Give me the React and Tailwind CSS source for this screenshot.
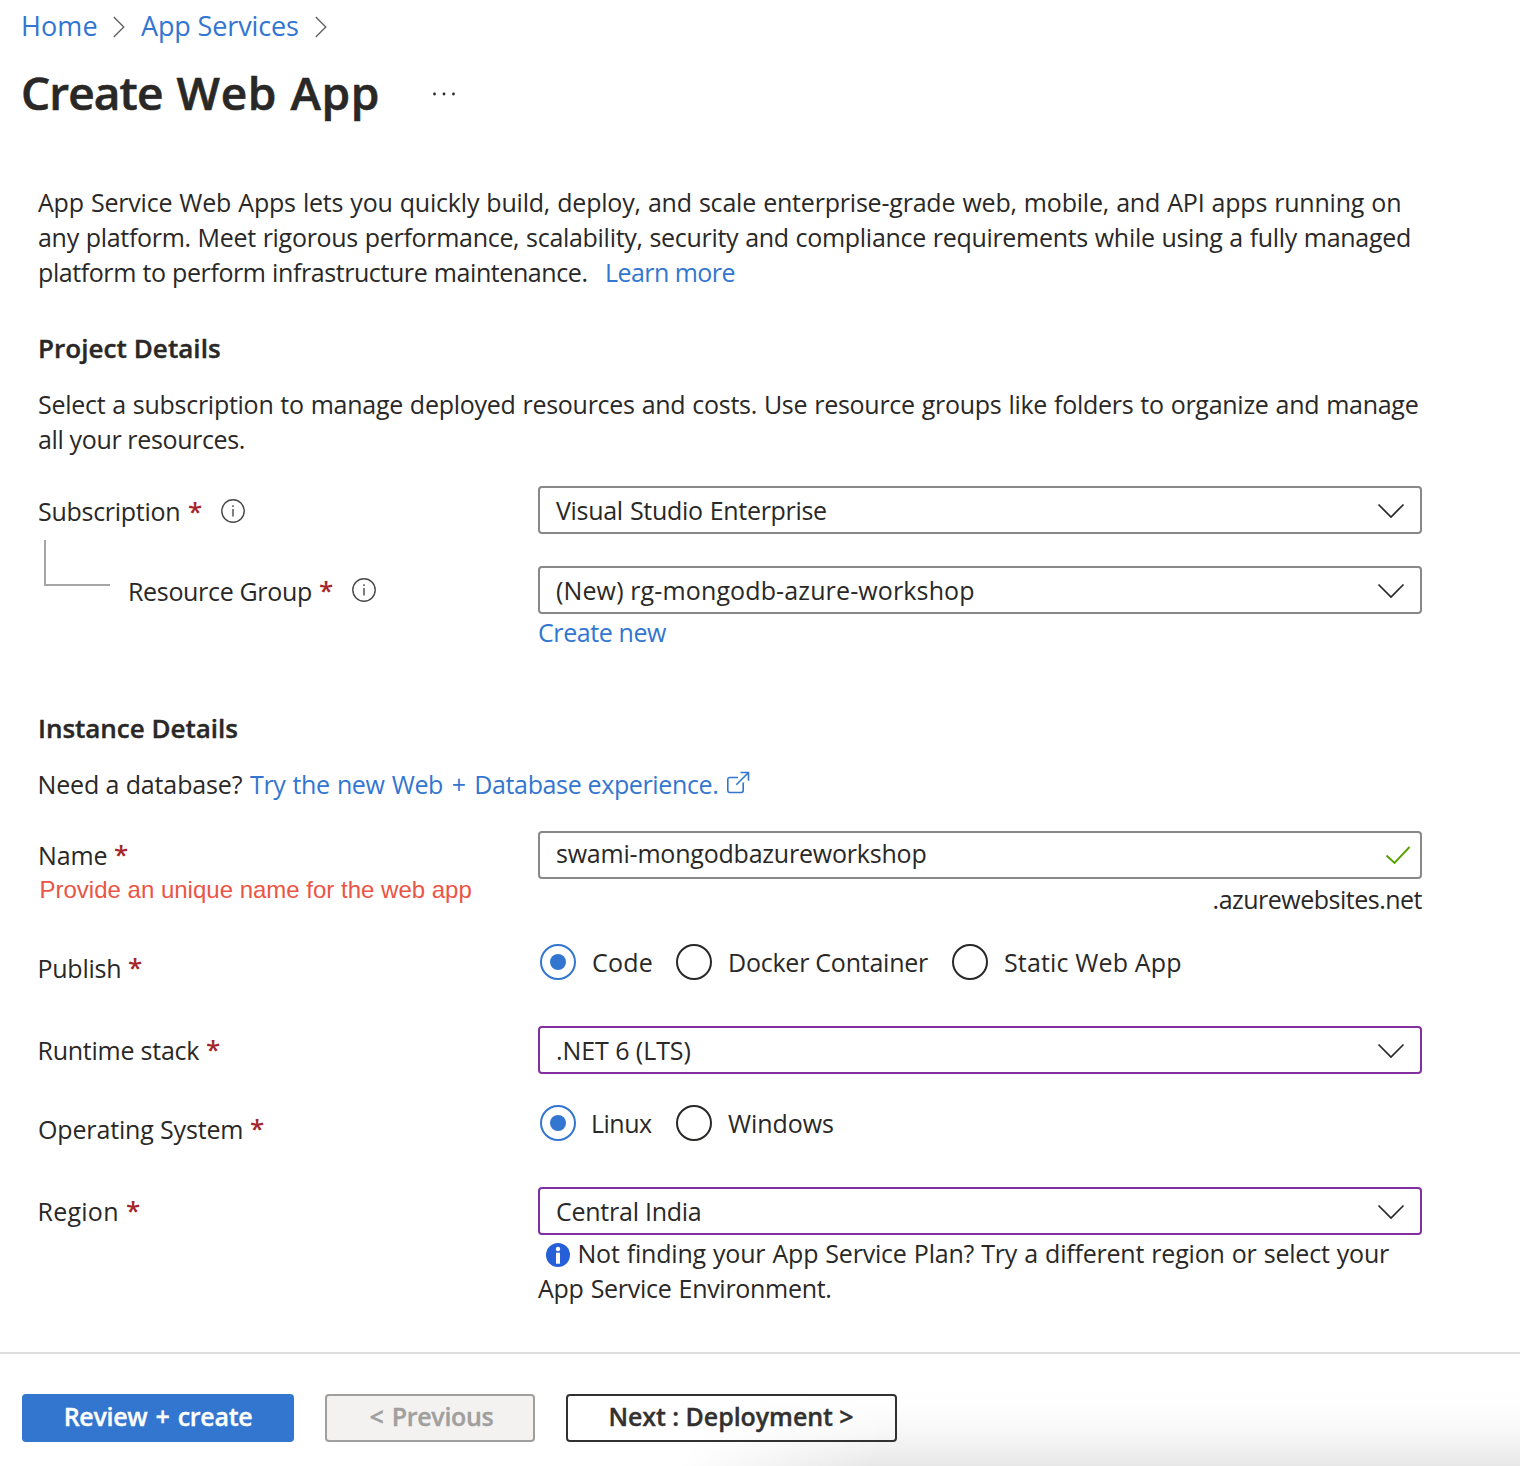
import React from "react";

function Chevron() {
  return (
    <svg className="mt-[2px] mr-[15px] block shrink-0" width="28" height="16" viewBox="0 0 28 16" fill="none" stroke="#292827" strokeWidth="1.7">
      <path d="M1.5 1.5 L14 14 L26.5 1.5" />
    </svg>
  );
}

function Crumb({ className }) {
  return (
    <svg className={className} width="12" height="22" viewBox="0 0 12 22" fill="none" stroke="#605e5c" strokeWidth="1.3">
      <path d="M0.8 1 L10.8 11 L0.8 21" />
    </svg>
  );
}

function Info({ className }) {
  return (
    <svg className={className} width="24" height="24" viewBox="0 0 24 24" fill="none" stroke="#4a4846" strokeWidth="1.4">
      <circle cx="12" cy="12" r="11.2" />
      <path d="M12 10v7.6" />
      <path d="M12 6.3v1.8" />
    </svg>
  );
}

function Star({ className = "ml-[8px]" }) {
  return <span className={`${className} text-[#a4262c] font-semibold text-[26px]`}>*</span>;
}

function Select({ border = "border-[#8a8886]", children }) {
  return (
    <div className={`flex h-12 w-[884px] items-center justify-between rounded-[4px] border-2 ${border} bg-white`}>
      <span className="leading-[44px]">{children}</span>
      <Chevron />
    </div>
  );
}

function Radio({ checked, className = "" }) {
  return (
    <span className={`${className} flex size-9 shrink-0 items-center justify-center rounded-full border-2 ${checked ? "border-[#3276d0]" : "border-[#292827]"}`}>
      {checked && <span className="size-4 rounded-full bg-[#3276d0]" />}
    </span>
  );
}

export default function App() {
  return (
    <div className="flex h-[1466px] w-[1520px] flex-col overflow-hidden bg-white font-['Open_Sans','Noto_Sans',sans-serif] text-[25px] leading-[36px] whitespace-nowrap text-[#292827]">
      <nav className="flex h-[45px] items-start pt-[6px] text-[27px] leading-[40px] text-[#3276d0]">
        <a className="ml-[21px] w-[92px] tracking-[0.1px]">Home</a>
        <Crumb className="mt-[10px]" />
        <a className="ml-[16px] w-[174px] tracking-[-0.14px]">App Services</a>
        <Crumb className="mt-[10px]" />
      </nav>

      <header className="mt-[15px] flex h-16 items-center">
        <h1 className="ml-[21px] w-[411px] text-[46px] leading-[64px] font-semibold tracking-[0.6px] [-webkit-text-stroke:0.6px]">
          <span className="mr-[1.500px] tracking-[-0.9px]">Create</span> Web <span className="ml-[1px]">App</span>
        </h1>
        <svg className="mt-[4px]" width="24" height="4" viewBox="0 0 24 4" fill="#292827">
          <circle cx="2.5" cy="2" r="1.4" />
          <circle cx="12" cy="2" r="1.4" />
          <circle cx="21.500" cy="2" r="1.4" />
        </svg>
      </header>

      <main className="ml-[38px]">
        <div className="mt-[61px] leading-[35px]">
          <div className="tracking-[-0.2px] [word-spacing:0.8px]">App Service Web Apps lets you quickly build, deploy, and scale enterprise-grade web, mobile, and API apps running on</div>
          <div className="tracking-[-0.295px] [word-spacing:0.6px]">any platform. Meet rigorous performance, scalability, security and compliance requirements while using a fully managed</div>
          <div className="flex">
            <span className="w-[567px] tracking-[-0.42px] [word-spacing:0.5px]">platform to perform infrastructure maintenance.</span>
            <a className="tracking-[-0.55px] text-[#3276d0]">Learn more</a>
          </div>
        </div>

        <h2 className="mt-[40px] text-[26px] font-semibold tracking-[0.06px] [-webkit-text-stroke:0.4px]">Project Details</h2>
        <div className="mt-[21px] leading-[35px]">
          <div className="tracking-[-0.27px] [word-spacing:0.7px]">Select a subscription to manage deployed resources and costs. Use resource groups like folders to organize and manage</div>
          <div className="tracking-[-0.36px]">all your resources.</div>
        </div>

        <div className="mt-[29px] flex">
          <div className="flex w-[500px] pt-[7px]">
            <span className="w-[150px] tracking-[-0.28px]">Subscription</span>
            <Star className="w-[33px]" />
            <Info className="mt-[6px]" />
          </div>
          <Select><span className="ml-[16px] tracking-[-0.32px] [word-spacing:1px]">Visual Studio Enterprise</span></Select>
        </div>

        <div className="flex h-[116px]">
          <div className="mt-[6px] ml-[6px] h-[46px] w-[66px] border-b-2 border-l-2 border-[#a8a6a4]" />
          <div className="mt-[39px] ml-[18px] flex w-[410px]">
            <span className="w-[191px] tracking-[-0.33px]">Resource Group</span>
            <Star className="-mt-px w-[33px]" />
            <Info className="mt-[5px]" />
          </div>
          <div className="mt-[32px]">
            <Select><span className="ml-[16px] tracking-[0.13px]">(New) rg-mongodb-azure-workshop</span></Select>
            <a className="block tracking-[-0.41px] text-[#3276d0]">Create new</a>
          </div>
        </div>

        <h2 className="mt-[60px] text-[26px] font-semibold tracking-[-0.02px] [-webkit-text-stroke:0.4px]">Instance Details</h2>
        <div className="mt-[20px] flex">
          <span className="-ml-[0.500px] w-[212.500px] tracking-[-0.13px]">Need a database?</span>
          <a className="flex tracking-[-0.36px] text-[#3276d0]">
            <span className="w-[476px]"><span className="[word-spacing:1px]">Try the new Web</span> <span className="mx-[2.500px]">+</span> Database experience.</span>
            <svg className="mt-[5px]" width="24" height="24" viewBox="0 0 24 24" fill="none" stroke="#3276d0" strokeWidth="1.6">
              <path d="M12 6.500H3.500A2 2 0 0 0 1.800 8.300V19.500A2 2 0 0 0 3.500 21.500H15.300A2 2 0 0 0 17.200 19.500V11.500" />
              <path d="M10.300 13.700L22.300 1.700M14.500 1.500H22.500V9.800" />
            </svg>
          </a>
        </div>

        <div className="mt-[29px] flex h-[86px]">
          <div className="w-[500px] pt-[6px]">
            <div className="flex">
              <span className="w-[76px] tracking-[-0.15px]">Name</span>
              <Star className="-mt-px" />
            </div>
            <div className="mt-[3px] ml-[1.500px] font-['Liberation_Sans',Arial,sans-serif] text-[24px] leading-[28px] text-[#ea5546]">Provide an unique name for the web app</div>
          </div>
          <div className="w-[884px]">
            <div className="flex h-12 items-center justify-between rounded-[4px] border-2 border-[#8a8886]">
              <span className="-mt-[4px] ml-[16px] leading-[44px] tracking-[-0.21px]">swami-mongodbazureworkshop</span>
              <svg className="mr-[9px]" width="26" height="20" viewBox="0 0 26 20" fill="none" stroke="#57a300" strokeWidth="1.9">
                <path d="M1.500 10.500L9.500 18L24.500 2" />
              </svg>
            </div>
            <div className="mt-[2px] text-right tracking-[-0.5px]">.azurewebsites.net</div>
          </div>
        </div>

        <div className="mt-[27px] flex h-[42px]">
          <div className="flex w-[500px] pt-[6px]">
            <span className="-ml-[0.500px] w-[90.500px] tracking-[-0.25px]">Publish</span>
            <Star className="-mt-px" />
          </div>
          <div className="flex">
            <Radio checked className="ml-[2px]" />
            <span className="ml-[16px] w-[84px] tracking-[0.2px]">Code</span>
            <Radio />
            <span className="ml-[16px] w-[224px] tracking-[-0.24px]">Docker Container</span>
            <Radio />
            <span className="ml-[16px] tracking-[0.15px]">Static Web App</span>
          </div>
        </div>

        <div className="mt-[40px] flex">
          <div className="flex w-[500px] pt-[6px]">
            <span className="-ml-[0.500px] w-[168.500px] tracking-[-0.24px]">Runtime stack</span>
            <Star className="-mt-px" />
          </div>
          <Select border="border-[#8230a0]"><span className="ml-[16px] tracking-[-0.07px]">.NET 6 (LTS)</span></Select>
        </div>

        <div className="mt-[31px] flex h-[42px]">
          <div className="flex w-[500px] pt-[6px]">
            <span className="w-[212px] tracking-[-0.15px]">Operating System</span>
            <Star className="-mt-px" />
          </div>
          <div className="flex">
            <Radio checked className="ml-[2px]" />
            <span className="ml-[15px] w-[85px] tracking-[-0.5px]">Linux</span>
            <Radio />
            <span className="ml-[16px] tracking-[-0.07px]">Windows</span>
          </div>
        </div>

        <div className="mt-[40px] flex">
          <div className="flex w-[500px] pt-[6px]">
            <span className="-ml-[0.500px] w-[88.500px] tracking-[0.25px]">Region</span>
            <Star className="-mt-px" />
          </div>
          <div>
            <Select border="border-[#8230a0]"><span className="ml-[16px] tracking-[-0.25px]">Central India</span></Select>
            <div className="mt-[1px] leading-[35px]">
              <div className="flex">
                <svg className="mt-[7px] ml-[8px]" width="24" height="24" viewBox="0 0 24 24">
                  <circle cx="12" cy="12" r="12" fill="#2560d8" />
                  <circle cx="12" cy="6" r="2.2" fill="#fff" />
                  <rect x="10" y="9.700" width="4" height="11" fill="#fff" />
                </svg>
                <span className="ml-[7.500px] tracking-[-0.2px] [word-spacing:0.8px]">Not finding your App Service Plan? Try a different region or select your</span>
              </div>
              <div className="tracking-[-0.3px] [word-spacing:1px]">App Service Environment.</div>
            </div>
          </div>
        </div>
      </main>

      <footer className="relative mt-[46px] flex flex-1 border-t-2 border-[#dfdfdf] pt-[40px] pl-[22px] text-[25px] leading-[40px] font-semibold [-webkit-text-stroke:0.35px]">
        <div className="pointer-events-none absolute right-0 bottom-0 h-[76px] w-[840px] bg-[linear-gradient(to_top,#e8e8e8,#f1f1f1_25%,#f9f9f9_50%,#fdfdfd_75%,#ffffff)] [mask-image:linear-gradient(115deg,transparent_4%,black_26%)]" />
        <button className="relative mr-[31px] flex h-12 w-[272px] items-center justify-center rounded-[4px] bg-[#3276d0] pb-[5px] text-white">
          <span className="tracking-[-0.3px]">Review <span className="mx-[2px]">+</span> create</span>
        </button>
        <button className="relative mr-[31px] flex h-12 w-[210px] items-center justify-center rounded-[4px] border-2 border-[#a19f9d] bg-[#f3f2f1] pb-[5px] pl-[3px] text-[#a19f9d]">
          <span className="tracking-[-0.3px]"><span className="mr-[2px]">&lt;</span> Previous</span>
        </button>
        <button className="relative flex h-12 w-[331px] items-center justify-center rounded-[4px] border-2 border-[#323130] pr-[1px] pb-[5px] tracking-[-0.05px] text-[#323130]">Next : Deployment &gt;</button>
      </footer>
    </div>
  );
}
